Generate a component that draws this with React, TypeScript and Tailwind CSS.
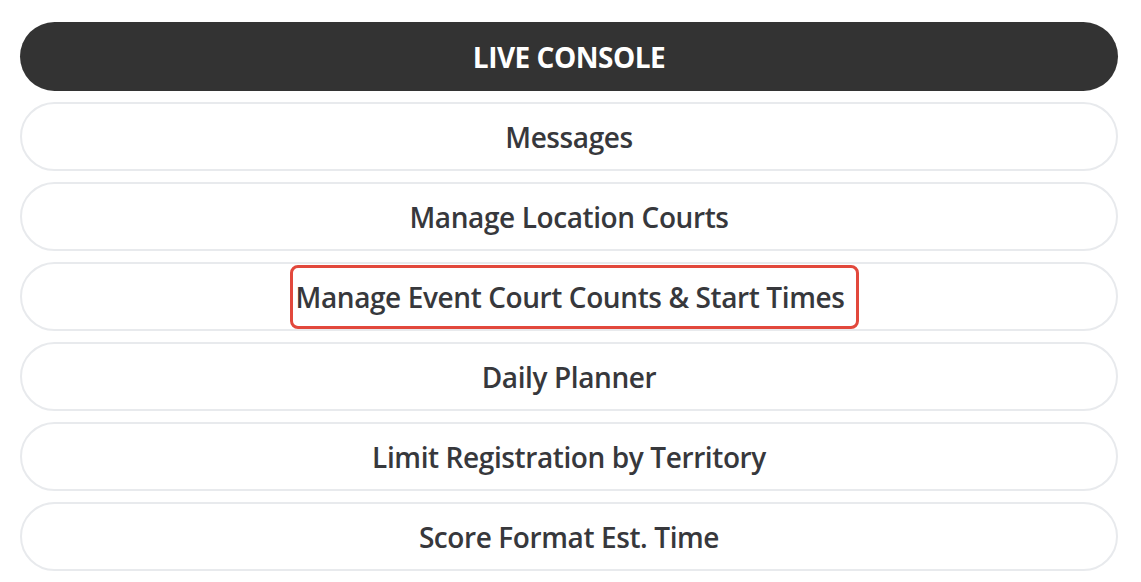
import React from "react";

const ITEMS = [
  "Messages",
  "Manage Location Courts",
  "Manage Event Court Counts & Start Times",
  "Daily Planner",
  "Limit Registration by Territory",
  "Score Format Est. Time",
];

const HIGHLIGHT = "Manage Event Court Counts & Start Times";

const App: React.FC = () => {
  return (
    <div
      className="h-[582px] overflow-hidden bg-white pl-5 pt-[22px]"
      style={{ fontFamily: '"Open Sans", "Noto Sans", sans-serif' }}
    >
      <div className="flex w-[1098px] flex-col gap-[11px]">
        <button className="flex h-[69px] items-center justify-center rounded-full bg-[#333333] text-[28px] font-bold tracking-[-0.5px] text-white">
          LIVE CONSOLE
        </button>
        {ITEMS.map((item) => (
          <button
            key={item}
            className="flex h-[69px] items-center justify-center rounded-full border-2 border-[#e8eaed] bg-white text-[28px] font-semibold tracking-[-0.4px] text-[#37383c]"
          >
            {item === HIGHLIGHT ? (
              <span className="ml-[11px] flex h-[64px] items-center rounded-lg border-[3px] border-[#e2483c] pl-[3px] pr-[12px]">
                {item}
              </span>
            ) : (
              item
            )}
          </button>
        ))}
        {/* next row, only its top edge shows */}
        <div className="h-[69px] rounded-full border-2 border-[#eef0f2]" />
      </div>
    </div>
  );
};

export default App;
